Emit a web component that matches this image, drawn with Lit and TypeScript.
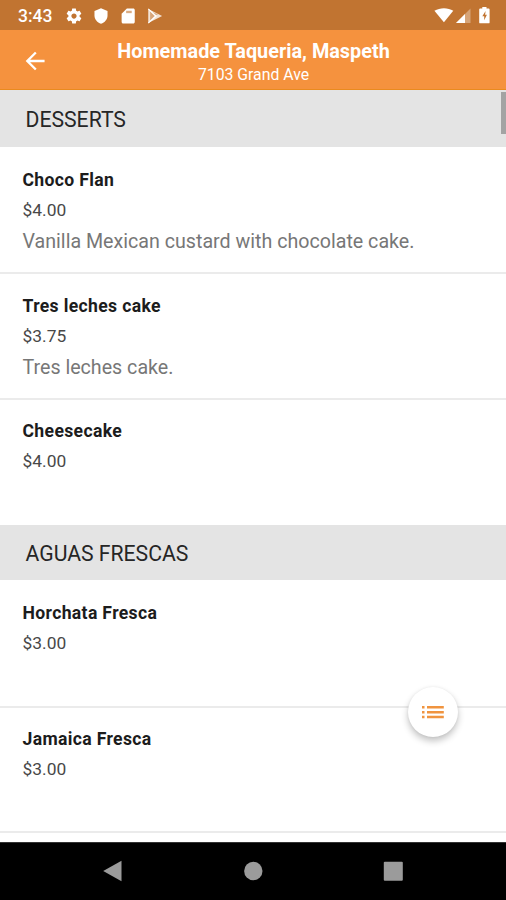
import { LitElement, html, css, nothing } from "lit";
import { customElement, property } from "lit/decorators.js";

interface MenuEntry {
  name: string;
  price: string;
  note?: string;
}

const SECTIONS: { title: string; entries: MenuEntry[] }[] = [
  {
    title: "DESSERTS",
    entries: [
      { name: "Choco Flan", price: "$4.00", note: "Vanilla Mexican custard with chocolate cake." },
      { name: "Tres leches cake", price: "$3.75", note: "Tres leches cake." },
      { name: "Cheesecake", price: "$4.00" },
    ],
  },
  {
    title: "AGUAS FRESCAS",
    entries: [
      { name: "Horchata Fresca", price: "$3.00" },
      { name: "Jamaica Fresca", price: "$3.00" },
    ],
  },
];

@customElement("status-bar")
export class StatusBar extends LitElement {
  static styles = css`
    :host {
      display: flex;
      align-items: center;
      height: 30px;
      box-sizing: border-box;
      padding: 1px 16.5px 0 18px;
      background: #c17431;
      color: #fff;
    }
    .time {
      width: 47px;
      font: 500 17.5px/30px Roboto, sans-serif;
    }
    .left {
      display: flex;
      align-items: center;
      gap: 9px;
      flex: 1;
    }
    .right {
      display: flex;
      align-items: center;
      padding-bottom: 1px;
    }
    svg {
      display: block;
      fill: currentColor;
    }
    .signal {
      margin: 0 8px 0 2px;
    }
  `;
  render() {
    return html`
      <span class="time">3:43</span>
      <div class="left">
        <svg width="18" height="18" viewBox="0 0 24 24">
          <path
            d="M19.43 12.98c.04-.32.07-.64.07-.98s-.03-.66-.07-.98l2.11-1.65c.19-.15.24-.42.12-.64l-2-3.46c-.12-.22-.39-.3-.61-.22l-2.49 1c-.52-.4-1.08-.73-1.69-.98l-.38-2.65C14.46 2.18 14.25 2 14 2h-4c-.25 0-.46.18-.49.42l-.38 2.65c-.61.25-1.17.59-1.69.98l-2.49-1c-.23-.09-.49 0-.61.22l-2 3.46c-.13.22-.07.49.12.64l2.11 1.65c-.04.32-.07.65-.07.98s.03.66.07.98l-2.11 1.65c-.19.15-.24.42-.12.64l2 3.46c.12.22.39.3.61.22l2.49-1c.52.4 1.08.73 1.69.98l.38 2.65c.03.24.24.42.49.42h4c.25 0 .46-.18.49-.42l.38-2.65c.61-.25 1.17-.59 1.69-.98l2.49 1c.23.09.49 0 .61-.22l2-3.46c.12-.22.07-.49-.12-.64l-2.11-1.65zM12 15.5c-1.93 0-3.5-1.57-3.5-3.5s1.57-3.5 3.5-3.5 3.5 1.57 3.5 3.5-1.57 3.5-3.5 3.5z"
          />
        </svg>
        <svg width="18" height="18" viewBox="0 0 24 24">
          <path d="M12 1.8L3.300 5.400v6c0 5 3.700 9.600 8.700 10.800 5-1.200 8.700-5.800 8.700-10.800v-6z" />
        </svg>
        <svg width="18" height="18" viewBox="0 0 24 24">
          <path d="M19 2h-8.500L3.500 9v11c0 1.100.9 2 2 2H19c1.100 0 2-.9 2-2V4c0-1.100-.9-2-2-2z" />
          <path d="M9.500 5h7.500v3.200H9.500z" fill="#c17431" opacity=".6" />
        </svg>
        <svg width="18" height="18" viewBox="0 0 24 24">
          <path d="M3 2.600v18.800L21.500 12z" opacity=".8" />
          <path d="M5.500 6v12l6-6zM9 7l4 4 3-1.200z" fill="#c17431" opacity=".55" />
          <path d="M3 2.600l10.500 9.400L3 21.400M9 16l4.500-4" fill="none" stroke="#fff" stroke-width="1.500" />
        </svg>
      </div>
      <div class="right">
        <svg width="20" height="17" viewBox="0 0 20 17">
          <path d="M.4 3.800C6 .3 14 .3 19.300 3.800L9.900 15.200z" />
        </svg>
        <svg class="signal" width="15" height="17" viewBox="0 0 15 17">
          <path d="M14.500 1.500v14.500H0z" opacity=".35" />
          <path d="M9 7V16H0z" />
        </svg>
        <svg width="11" height="18" viewBox="0 0 11 18">
          <path
            fill-rule="evenodd"
            d="M3.300 1h4.200v1.600h2.200c.5 0 .9.400.9.900v12.900c0 .5-.4.900-.9.900H1.100c-.5 0-.9-.4-.9-.9v-12.900c0-.5.400-.9.900-.9h2.200zM6.600 5L3.300 10.300h1.900V14.300L7.900 8.800H6.100z"
          />
        </svg>
      </div>
    `;
  }
}

@customElement("title-bar")
export class TitleBar extends LitElement {
  static styles = css`
    :host {
      display: grid;
      grid-template-columns: 70px 1fr 70px;
      height: 60px;
      box-sizing: border-box;
      border-bottom: 1px solid #ea8a1e;
      background: #f5923e;
      color: #fff;
      font-family: Roboto, sans-serif;
    }
    .back {
      align-self: center;
      margin: 2px 0 0 21px;
      fill: currentColor;
    }
    .titles {
      display: flex;
      flex-direction: column;
      align-items: center;
      padding: 10px 0 0 1px;
      white-space: nowrap;
    }
    .name {
      font: 700 19.85px/24px Roboto, sans-serif;
    }
    .street {
      font: 400 15.8px/22px Roboto, sans-serif;
    }
  `;
  render() {
    return html`
      <svg class="back" width="28" height="28" viewBox="0 0 24 24">
        <path d="M20.200 11H7.830l5.590-5.590L12 4l-8 8 8 8 1.410-1.410L7.830 13H20.200z" />
      </svg>
      <div class="titles">
        <div class="name">Homemade Taqueria, Maspeth</div>
        <div class="street">7103 Grand Ave</div>
      </div>
    `;
  }
}

@customElement("menu-item")
export class MenuItem extends LitElement {
  @property({ attribute: false }) entry!: MenuEntry;
  static styles = css`
    :host {
      display: block;
      padding: 18px 22.5px 0;
      font-family: Roboto, sans-serif;
      white-space: nowrap;
    }
    .name {
      font-size: 17.6px;
      font-weight: 700;
      letter-spacing: 0.34px;
      line-height: 30px;
      color: #1c1c1c;
    }
    .price {
      font-size: 17.4px;
      line-height: 31px;
      color: #484848;
    }
    .note {
      font-size: 19.65px;
      line-height: 32px;
      color: #777;
    }
  `;
  render() {
    const { name, price, note } = this.entry;
    return html`
      <div class="name">${name}</div>
      <div class="price">${price}</div>
      ${note ? html`<div class="note">${note}</div>` : nothing}
    `;
  }
}

@customElement("app-root")
export class AppRoot extends LitElement {
  static styles = css`
    :host {
      position: relative;
      display: flex;
      flex-direction: column;
      height: 900px;
      overflow: hidden;
      background: #fff;
    }
    .list {
      flex: 1;
      min-height: 0;
      overflow: hidden;
    }
    .heading {
      height: 55.5px;
      margin-top: 2.1px;
      box-sizing: border-box;
      padding-left: 25.5px;
      background: #e4e4e4;
      color: #262626;
      font: 400 21.2px/58px Roboto, sans-serif;
    }
    .heading.first {
      height: 57px;
      margin-top: 0;
      line-height: 60px;
    }
    .row {
      height: 125.3px;
      box-sizing: border-box;
    }
    .row + .row,
    .row + .end {
      border-top: 2px solid #ebebeb;
    }
    .row + .row {
      padding-top: 16.4px;
    }
    .scroll {
      position: absolute;
      top: 92px;
      right: 0;
      width: 5px;
      height: 42px;
      background: #a3a3a3;
    }
    .fab {
      position: absolute;
      left: 408px;
      top: 687px;
      display: grid;
      place-items: center;
      width: 50px;
      height: 50px;
      border-radius: 50%;
      background: #fff;
      box-shadow: 0 4px 7px rgba(0, 0, 0, 0.24), 0 0 3px rgba(0, 0, 0, 0.06);
    }
    .nav {
      display: grid;
      grid-template-columns: 1fr 1fr 1fr;
      place-items: center;
      height: 58px;
      box-sizing: border-box;
      padding: 0 43px 1px;
      background: #000;
      border-top: 1px solid #333;
    }
    .nav svg {
      fill: #9b9b9b;
    }
  `;
  render() {
    return html`
      <status-bar></status-bar>
      <title-bar></title-bar>
      <div class="list">
        ${SECTIONS.map(
          (section, s) => html`
            <div class="heading ${s === 0 ? "first" : ""}">${section.title}</div>
            ${section.entries.map((entry) => html`<menu-item class="row" .entry=${entry}></menu-item>`)}
            ${s === SECTIONS.length - 1 ? html`<div class="end"></div>` : nothing}
          `
        )}
      </div>
      <div class="nav">
        <svg width="20" height="22" viewBox="0 0 20 22"><path d="M18.500 .8v20.400L.2 11z" /></svg>
        <svg width="20" height="20" viewBox="0 0 20 20"><circle cx="10.300" cy="10" r="9.200" /></svg>
        <svg width="20" height="20" viewBox="0 0 20 20"><rect x=".8" y=".7" width="19" height="19" rx="1" /></svg>
      </div>
      <div class="scroll"></div>
      <div class="fab">
        <svg width="24" height="16" viewBox="0 0 24 16" fill="#f0943f">
          <path d="M1 2h2.500v2.500H1zm0 4.900h2.500v2.500H1zm0 4.900h2.500v2.500H1zM6 2H22.800v2.500H6zm0 4.900H22.800v2.500H6zm0 4.900H22.800v2.500H6z" />
        </svg>
      </div>
    `;
  }
}
